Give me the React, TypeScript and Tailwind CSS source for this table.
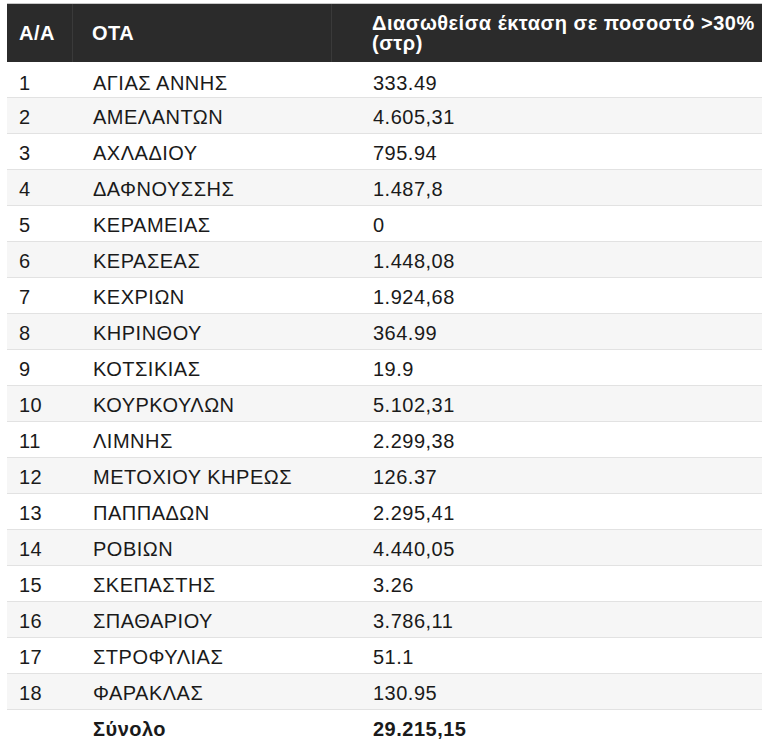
import React from "react";

const rows: [string, string, string][] = [
  ["1", "ΑΓΙΑΣ ΑΝΝΗΣ", "333.49"],
  ["2", "ΑΜΕΛΑΝΤΩΝ", "4.605,31"],
  ["3", "ΑΧΛΑΔΙΟΥ", "795.94"],
  ["4", "ΔΑΦΝΟΥΣΣΗΣ", "1.487,8"],
  ["5", "ΚΕΡΑΜΕΙΑΣ", "0"],
  ["6", "ΚΕΡΑΣΕΑΣ", "1.448,08"],
  ["7", "ΚΕΧΡΙΩΝ", "1.924,68"],
  ["8", "ΚΗΡΙΝΘΟΥ", "364.99"],
  ["9", "ΚΟΤΣΙΚΙΑΣ", "19.9"],
  ["10", "ΚΟΥΡΚΟΥΛΩΝ", "5.102,31"],
  ["11", "ΛΙΜΝΗΣ", "2.299,38"],
  ["12", "ΜΕΤΟΧΙΟΥ ΚΗΡΕΩΣ", "126.37"],
  ["13", "ΠΑΠΠΑΔΩΝ", "2.295,41"],
  ["14", "ΡΟΒΙΩΝ", "4.440,05"],
  ["15", "ΣΚΕΠΑΣΤΗΣ", "3.26"],
  ["16", "ΣΠΑΘΑΡΙΟΥ", "3.786,11"],
  ["17", "ΣΤΡΟΦΥΛΙΑΣ", "51.1"],
  ["18", "ΦΑΡΑΚΛΑΣ", "130.95"],
];

export default function App() {
  return (
    <div
      className="w-[768px] h-[755px] bg-white pl-[7px] pt-[3px] text-[#1a1a1a]"
      style={{ fontFamily: '"Liberation Sans", Arial, sans-serif' }}
    >
      <div className="w-[755px] text-[20px] leading-[20px] tracking-[0.5px]">
        <div className="flex h-[59px] border-t border-[#c8c8c8] bg-[#2b2b2b] font-bold text-white">
          <div className="flex w-[66px] items-center border-r border-[#3a3a3a] pl-[12px]">A/A</div>
          <div className="flex w-[259px] items-center border-r border-[#3a3a3a] pl-[19px]">OTA</div>
          <div className="flex flex-1 flex-col justify-center pl-[40px]">
            <span className="whitespace-nowrap">Διασωθείσα έκταση σε ποσοστό &gt;30%</span>
            <span>(στρ)</span>
          </div>
        </div>
        {rows.map(([n, name, val], i) => (
          <div
            key={n}
            className={`flex h-[36px] items-center border-b border-[#e2e2e2] ${
              i % 2 === 1 ? "bg-[#f6f6f6]" : "bg-white"
            } ${i === 0 ? "pt-[6px]" : "pt-[2px]"}`}
          >
            <div className="w-[66px] pl-[12px]">{n}</div>
            <div className="w-[259px] pl-[20px]">{name}</div>
            <div className="flex-1 pl-[41px]">{val}</div>
          </div>
        ))}
        <div className="flex h-[36px] items-center pt-[2px] font-bold">
          <div className="w-[66px] pl-[12px]"></div>
          <div className="w-[259px] pl-[20px]">Σύνολο</div>
          <div className="flex-1 pl-[41px]">29.215,15</div>
        </div>
      </div>
    </div>
  );
}
